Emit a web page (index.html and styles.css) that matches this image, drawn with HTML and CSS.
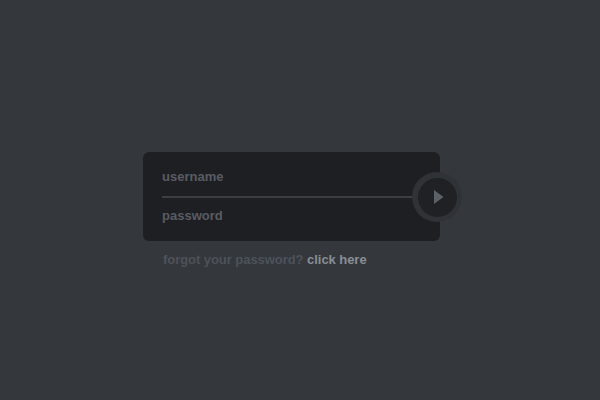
FILE: index.html
```html
<!DOCTYPE html>
<html>
<head>
<meta charset="utf-8">
<link rel="stylesheet" href="styles.css">
</head>
<body>
<div class="login">
  <div class="card">
    <div class="field field-user">username</div>
    <div class="divider"></div>
    <div class="field field-pass">password</div>
    <div class="go">
      <div class="go-inner">
        <svg width="10" height="14" viewBox="0 0 10 14"><path d="M0 0 L9.5 7 L0 14 Z" fill="#5c6067"/></svg>
      </div>
    </div>
  </div>
  <div class="forgot">forgot your password? <span class="click">click here</span></div>
</div>
</body>
</html>
```
FILE: styles.css
```css
html, body {
  margin: 0;
  padding: 0;
  background: #34373c;
  width: 600px;
  height: 400px;
  overflow: hidden;
  font-family: "Liberation Sans", Arial, sans-serif;
}
.login {
  width: 297px;
  margin: 152px 0 0 143px;
}
.card {
  position: relative;
  height: 89px;
  box-sizing: border-box;
  background: #1e1f23;
  border-radius: 6px;
  padding: 17px 0 0 19px;
}
.field {
  font-size: 13px;
  font-weight: bold;
  line-height: 16px;
  color: #585c63;
}
.field-user { margin-bottom: 11px; }
.field-pass { margin-top: 10px; }
.divider {
  height: 2px;
  margin-right: 22px;
  background: #3b3e43;
}
.go {
  position: absolute;
  left: 269px;
  top: 20px;
  width: 50px;
  height: 50px;
  box-sizing: border-box;
  border-radius: 50%;
  background: #2f3236;
  display: flex;
  align-items: center;
  justify-content: center;
}
.go-inner {
  width: 39px;
  height: 39px;
  border-radius: 50%;
  background: #1f2125;
  display: flex;
  align-items: center;
  justify-content: center;
  padding-left: 3px;
  box-sizing: border-box;
}
.go-inner svg { display: block; }
.forgot {
  margin-top: 11px;
  padding-left: 20px;
  font-size: 13px;
  font-weight: bold;
  line-height: 16px;
  letter-spacing: -0.05px;
  color: #4d5259;
}
.click { color: #8a8e95; }
```
